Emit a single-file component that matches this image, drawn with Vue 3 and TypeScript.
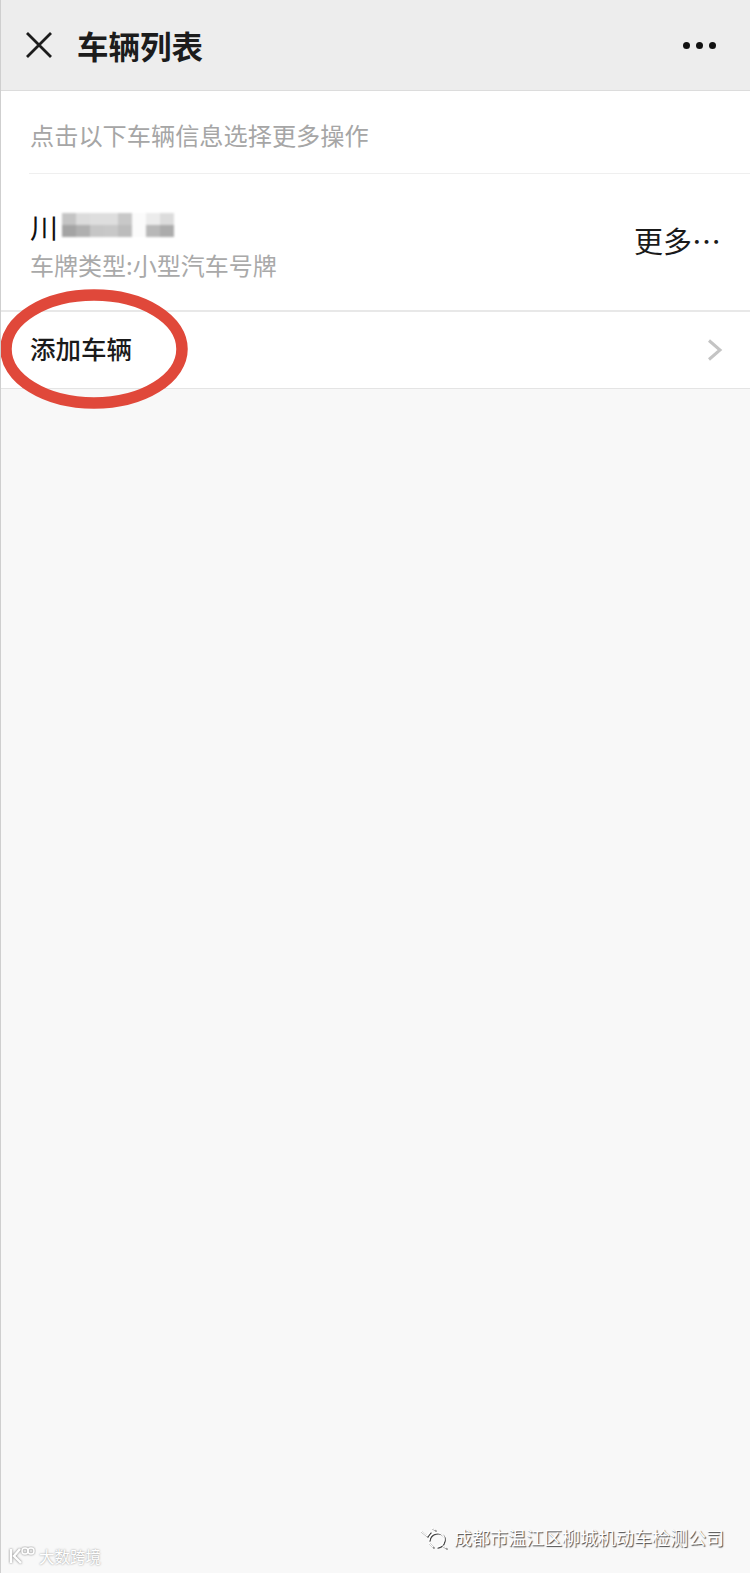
<script setup lang="ts">
// mosaic cells that hide the plate number
const mosaic: string[] = [
  '#c4c4c4', '#dcdcdc', '#dedede', '#dedede', '#c8c8c8', '#fbfbfb', '#ececec', '#dcdcdc',
  '#a4a4a4', '#b0b0b0', '#c6c6c6', '#c8c8c8', '#bcbcbc', '#fbfbfb', '#b8b8b8', '#acacac',
]
</script>

<template>
  <div class="page">
    <header class="topbar">
      <svg class="topbar__close" width="28" height="28" viewBox="0 0 28 28">
        <path d="M2 2 L26 26 M26 2 L2 26" stroke="#1c1c1c" stroke-width="2.8" fill="none" />
      </svg>
      <h1 class="topbar__title">车辆列表</h1>
      <div class="topbar__dots">
        <span></span>
        <span></span>
        <span></span>
      </div>
    </header>

    <section class="list">
      <div class="hint"><p class="hint__text">点击以下车辆信息选择更多操作</p></div>
      <div class="vehicle">
        <div class="vehicle__info">
          <div class="plate">
            <span class="plate__prefix">川</span>
            <div class="plate__mosaic">
              <i v-for="(c, i) in mosaic" :key="i" :style="{ background: c }"></i>
            </div>
          </div>
          <div class="vehicle__type">车牌类型:小型汽车号牌</div>
        </div>
        <div class="vehicle__more">更多…</div>
      </div>
      <div class="add-row">
        <span class="add-row__label">添加车辆</span>
        <svg class="add-row__arrow" width="16" height="22" viewBox="0 0 16 22">
          <path d="M2 1.5 L13 11 L2 20.5" stroke="#c4c4c4" stroke-width="3" fill="none" />
        </svg>
      </div>
    </section>

    <svg class="circle" width="194" height="126" viewBox="0 0 194 126">
      <ellipse cx="95" cy="62" rx="88" ry="54" fill="none" stroke="#e0483a" stroke-width="11.5" />
    </svg>

    <div class="mark-left">
      <svg width="28" height="20" viewBox="0 0 28 20">
        <g fill="none" stroke="#fff" stroke-width="2.4" class="mark-left__logo">
          <path d="M3 3 V17 M12 3 L6 10 L13 17" />
          <circle cx="17" cy="5" r="3" stroke-width="1.4" />
          <circle cx="23" cy="5" r="3" stroke-width="1.4" />
        </g>
      </svg>
      <span>大数跨境</span>
    </div>

    <div class="mark-right">
      <svg class="mark-right__icon" width="30" height="24" viewBox="0 0 30 24">
        <g fill="none" stroke="#fff" stroke-width="1.4" stroke-linecap="round">
          <path d="M2 6 L8 11 L11 7 M13 3 L16 5" />
          <path d="M10 15 A8 8 0 0 1 25 12 A8 8 0 0 1 18 22 M10 18 L14 22 M24 21 L27 23" />
        </g>
      </svg>
      <span>成都市温江区柳城机动车检测公司</span>
    </div>
  </div>
</template>

<style>
html,
body {
  margin: 0;
  background: #f8f8f8;
}
</style>

<style scoped>
.page {
  position: relative;
  width: 750px;
  height: 1573px;
  overflow: hidden;
  box-sizing: border-box;
  border-left: 1px solid #cfcfcf;
  background: #f8f8f8;
  font-family: "Noto Sans CJK SC", "Liberation Sans", sans-serif;
}

.topbar {
  display: flex;
  align-items: center;
  height: 91px;
  box-sizing: border-box;
  padding: 0 34px 0 24px;
  background: #ededed;
  border-bottom: 1px solid #dcdcdc;
}
.topbar__close {
  flex-shrink: 0;
}
.topbar__title {
  margin: 0 0 0 24px;
  flex: 1;
  font-size: 31.5px;
  font-weight: 700;
  line-height: 40px;
  color: #1c1c1c;
}
.topbar__dots {
  display: flex;
  gap: 6px;
}
.topbar__dots span {
  width: 7px;
  height: 7px;
  border-radius: 50%;
  background: #111;
}

.list {
  background: #fff;
  border-bottom: 1px solid #e4e4e4;
}
.hint {
  padding-left: 28px;
}
.hint__text {
  margin: 0;
  height: 82px;
  padding-left: 1px;
  border-bottom: 1px solid #efefef;
  font-size: 24.2px;
  line-height: 88px;
  color: #a6a6a6;
}

.vehicle {
  display: flex;
  align-items: center;
  justify-content: space-between;
  height: 136px;
  padding: 0 29px;
  border-bottom: 2px solid #e8e8e8;
}
.vehicle__info {
  display: flex;
  flex-direction: column;
  gap: 2px;
  margin-top: 3px;
}
.plate {
  display: flex;
  align-items: center;
  height: 40px;
}
.plate__prefix {
  width: 32px;
  font-size: 28px;
  color: #111;
}
.plate__mosaic {
  display: grid;
  grid-template-columns: repeat(8, 14px);
  grid-auto-rows: 12px;
  margin-top: -4px;
  filter: blur(1.2px);
}
.vehicle__type {
  font-size: 24px;
  line-height: 32px;
  color: #a9a9a9;
}
.vehicle__more {
  margin-top: -4px;
  font-size: 29px;
  line-height: 40px;
  color: #1a1a1a;
}

.add-row {
  display: flex;
  align-items: center;
  justify-content: space-between;
  height: 76px;
  padding: 0 27px 0 29px;
}
.add-row__label {
  margin-top: -5px;
  font-size: 25.5px;
  font-weight: 500;
  color: #1a1a1a;
}

.circle {
  position: absolute;
  left: -2px;
  top: 287px;
}

.mark-left {
  position: absolute;
  left: 7px;
  top: 1544px;
  display: flex;
  align-items: center;
  gap: 3px;
  font-size: 15.5px;
  line-height: 24px;
  color: #fff;
  text-shadow: 0 0 2px #8a8a8a;
}
.mark-left__logo {
  filter: drop-shadow(0 0 1px #777);
}

.mark-right {
  position: absolute;
  right: 26px;
  top: 1523px;
  display: flex;
  align-items: center;
  gap: 5px;
  font-size: 18px;
  line-height: 28px;
  color: #fff;
  text-shadow: 1px 1px 1px #444;
}
.mark-right__icon {
  filter: drop-shadow(1px 1px 0.5px #444);
}
</style>
